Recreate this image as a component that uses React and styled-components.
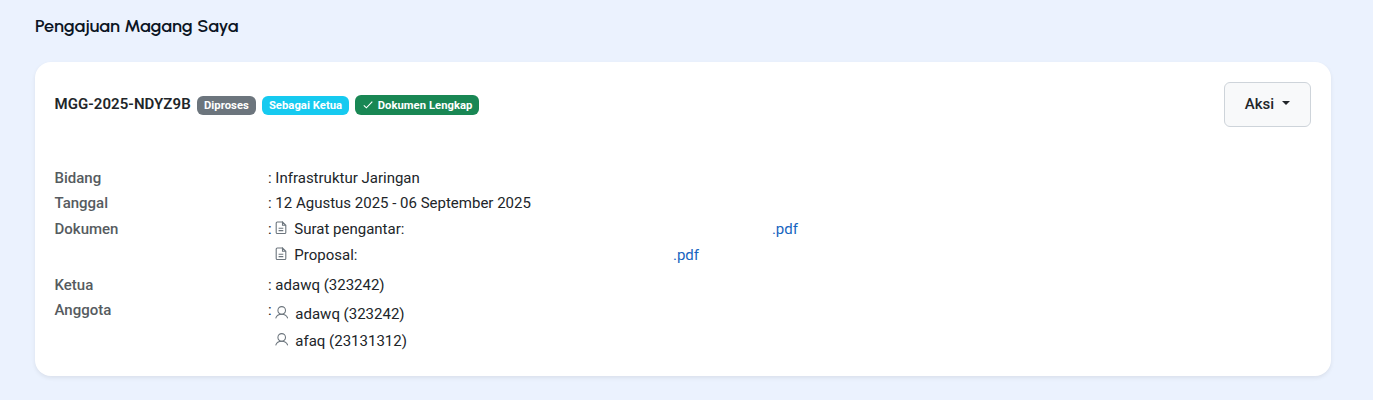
import React from "react";
import styled, { createGlobalStyle } from "styled-components";

const GlobalStyle = createGlobalStyle`
  *, *::before, *::after { box-sizing: border-box; }
  body {
    margin: 0;
    min-height: 400px;
    overflow: hidden;
    background: #ebf2fe;
    color: #212529;
    font-family: Roboto, "Liberation Sans", sans-serif;
    font-size: 15px;
  }
`;

const Page = styled.main`
  padding: 14px 42px 24px 35px;
`;

const Title = styled.h1`
  margin: 0 0 24px;
  height: 24px;
  font: 600 18px/24px Urbanist, Inter, sans-serif;
  font-feature-settings: "cv11";
  letter-spacing: 0.07px;
  color: #0b1524;
`;

const Card = styled.section`
  height: 314px;
  padding: 20px 20px 20px 19.5px;
  border-radius: 16px;
  background: #fff;
  box-shadow: 0 2px 4px rgba(0, 0, 0, 0.075);
`;

const CardHeader = styled.header`
  display: flex;
  justify-content: space-between;
  align-items: flex-start;
  height: 45px;
`;

const Heading = styled.div`
  display: flex;
  align-items: flex-start;
  gap: 6px;
  padding-top: 12px;
`;

const Code = styled.h2`
  margin: 0;
  width: 136.5px;
  font-size: 15px;
  font-weight: 600;
  letter-spacing: 0.06px;
  line-height: 20px;
  white-space: nowrap;
`;

const Badge = styled.span`
  display: inline-flex;
  align-items: center;
  height: ${(p) => (p.$tall ? 20 : 19)}px;
  margin-top: ${(p) => (p.$tall ? 1 : 2)}px;
  padding: ${(p) => (p.$tall ? 1 : 0)}px 7px 0;
  border-radius: 6px;
  background: ${(p) => p.$color};
  color: #fff;
  font-size: 11.25px;
  font-weight: 700;
  letter-spacing: 0.04px;
  line-height: 1;
  white-space: nowrap;

  svg { margin: -1px 3.5px 0 0; }
`;

const ActionButton = styled.button`
  display: flex;
  align-items: center;
  justify-content: center;
  width: 87px;
  height: 45px;
  padding: 0 0 2px;
  border: 1px solid #ced4da;
  border-radius: 6px;
  background: #f8f9fa;
  color: #212529;
  font: 500 15px/22px Roboto, sans-serif;

  &::after {
    content: "";
    margin: -1px 0 0 8px;
    border-top: 4px solid;
    border-right: 4px solid transparent;
    border-left: 4px solid transparent;
  }
`;

const Details = styled.dl`
  display: grid;
  grid-template-columns: 213.5px 1fr;
  grid-template-rows: 25px 26px 56px 25px 60px;
  margin: 38px 0 0;
`;

const Label = styled.dt`
  color: #565b60;
  font-weight: 500;
  line-height: 26px;
`;

const Value = styled.dd`
  display: flex;
  gap: 3px;
  margin: 0;
  line-height: 26px;
`;

const List = styled.ul`
  margin: 0;
  padding: ${(p) => p.$top || 0}px 0 0;
  list-style: none;
`;

const Item = styled.li`
  display: flex;
  height: ${(p) => p.$height}px;
  color: #212529;
  white-space: nowrap;

  svg { margin: ${(p) => p.$iconTop}px 7.7px 0 0; color: #6c757d; }
`;

const FileLink = styled.a`
  margin-left: ${(p) => p.$offset}px;
  color: #1664c0;
  text-decoration: none;
`;

const CheckIcon = () => (
  <svg width="12" height="12" viewBox="0 0 12 12" fill="none" stroke="currentColor" strokeWidth="1.1">
    <path d="M1.8 6.3 4.4 8.8 10.3 2.6" />
  </svg>
);

const FileIcon = () => (
  <svg width="12" height="14" viewBox="0 0 12 14" fill="none" stroke="currentColor" strokeWidth="1.1">
    <path d="M7.5 1H2.3Q1.2 1 1.2 2.1v9.3q0 1.1 1.1 1.1h7.4q1.1 0 1.1-1.1V4.3L7.5 1v3.3h3.3M3.6 7.2h4.7M3.6 9.6h4.7" />
  </svg>
);

const UserIcon = () => (
  <svg width="13" height="13" viewBox="0 0 13 13" fill="none" stroke="currentColor" strokeWidth="1.05">
    <circle cx="6.7" cy="4.4" r="3.8" />
    <path d="M.7 12.3C1.5 9.6 3.7 8.2 6.7 8.2s5.2 1.4 6 4.1" />
  </svg>
);

const documents = [
  { name: "Surat pengantar:", offset: 367.5 },
  { name: "Proposal:", offset: 315.5 },
];
const members = ["adawq (323242)", "afaq (23131312)"];

export default function App() {
  return (
    <Page>
      <GlobalStyle />
      <Title>Pengajuan Magang Saya</Title>
      <Card>
        <CardHeader>
          <Heading>
            <Code>MGG-2025-NDYZ9B</Code>
            <Badge $color="#6c757d">Diproses</Badge>
            <Badge $color="#16caf0">Sebagai Ketua</Badge>
            <Badge $color="#198754" $tall><CheckIcon />Dokumen Lengkap</Badge>
          </Heading>
          <ActionButton type="button">Aksi</ActionButton>
        </CardHeader>
        <Details>
          <Label>Bidang</Label>
          <Value>: Infrastruktur Jaringan</Value>
          <Label>Tanggal</Label>
          <Value>: 12 Agustus 2025 - 06 September 2025</Value>
          <Label>Dokumen</Label>
          <Value>
            <span>:</span>
            <List>
              {documents.map((doc) => (
                <Item key={doc.name} $height={26} $iconTop={5}>
                  <FileIcon />
                  {doc.name}
                  <FileLink $offset={doc.offset}>.pdf</FileLink>
                </Item>
              ))}
            </List>
          </Value>
          <Label>Ketua</Label>
          <Value>: adawq (323242)</Value>
          <Label>Anggota</Label>
          <Value>
            <span>:</span>
            <List $top={4}>
              {members.map((member) => (
                <Item key={member} $height={27} $iconTop={5}>
                  <UserIcon />
                  {member}
                </Item>
              ))}
            </List>
          </Value>
        </Details>
      </Card>
    </Page>
  );
}
